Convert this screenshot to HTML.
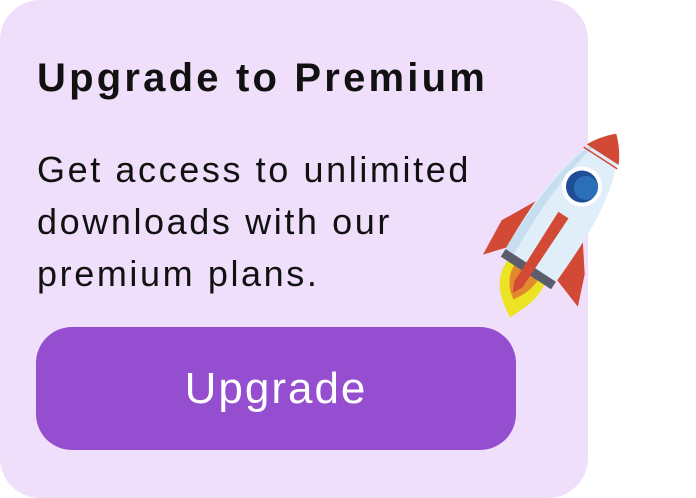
<!DOCTYPE html>
<html><head><style>
html,body{margin:0;padding:0;background:#fff;width:696px;height:498px;overflow:hidden}
.card{position:absolute;left:0;top:0;width:588px;height:498px;background:#efdffb;border-radius:40px}
h1{position:absolute;left:37px;top:54px;margin:0;font:bold 40px/48px "Liberation Sans",sans-serif;color:#111;letter-spacing:3.2px;white-space:nowrap}
p{position:absolute;left:37px;top:144px;margin:0;width:450px;font:36px/52px "Liberation Sans",sans-serif;color:#111;letter-spacing:2.6px}
.btn{position:absolute;left:36px;top:327px;width:480px;height:123px;background:#954ecf;border-radius:36px;color:#fff;font:44px/123px "Liberation Sans",sans-serif;text-align:center;letter-spacing:2px}
svg{position:absolute;left:0;top:0}
</style></head><body>
<div class="card"></div>
<h1>Upgrade to Premium</h1>
<p>Get access to unlimited downloads with our premium plans.</p>
<div class="btn">Upgrade</div>
<svg width="696" height="498" viewBox="0 0 696 498">
<g transform="translate(570,205) rotate(33)">
<path d="M-22,80 C-24,105 -5,118 11,127 C18,110 24,100 22,80 Z" fill="#ebe324"/>
<path d="M-14,80 C-14,95 -4,105 4,110 C10,100 14,92 14,80 Z" fill="#e28a2b"/>
<path d="M-28,10 L-49,50 L-46,89 L-30,70 Z" fill="#d24a36"/>
<path d="M28,20 L50,50 L62,81 L30,70 Z" fill="#d24a36"/>
<path d="M0,-85 C25,-60 35,-10 30,75 L-30,75 C-35,-10 -25,-60 0,-85 Z" fill="#e0eef9"/>
<path d="M-8,-75 C-25,-50 -32,0 -30,75 L-20,75 C-24,10 -20,-40 -8,-75 Z" fill="#c7ddf0"/>
<path d="M0,-85 C9,-77 15,-68 19,-60 L-19,-60 C-15,-68 -9,-77 0,-85 Z" fill="#d24a36"/>
<path d="M-20,-56 L20,-56" stroke="#d24a36" stroke-width="1.5"/>
<rect x="-30" y="72" width="60" height="9" fill="#5c5d6c"/>
<circle cx="0" cy="-22" r="20" fill="#fff"/>
<circle cx="0" cy="-22" r="16" fill="#1f4e96"/>
<circle cx="4" cy="-23" r="12" fill="#2b6fb8"/>
<path d="M-6,12 L6,12 L5,95 L0,105 L-5,95 Z" fill="#d24a36"/>
</g>
</svg>
</body></html>
